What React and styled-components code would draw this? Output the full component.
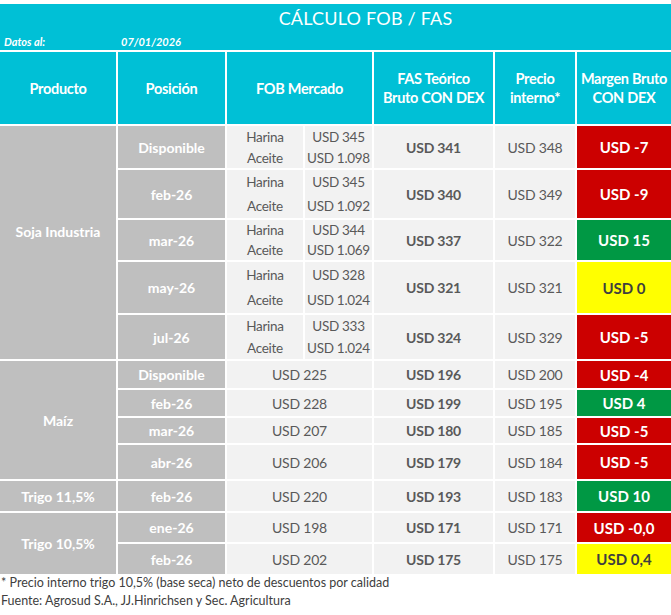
import React from 'react';
import styled, { createGlobalStyle } from 'styled-components';

const CYAN = '#00c0d6';
const LABEL_GRAY = '#bfbfbf';
const CELL_BG = '#f2f2f2';
const TEXT_GRAY = '#595959';

const marginColors = {
  red: { bg: '#cc0000', fg: '#ffffff' },
  green: { bg: '#009844', fg: '#ffffff' },
  yellow: { bg: '#ffff00', fg: '#3f3f3f' },
};

const GlobalStyle = createGlobalStyle`
  body {
    margin: 0;
    background: #ffffff;
    font-family: Lato, "Open Sans", sans-serif;
  }
`;

const Page = styled.div`
  width: 671px;
  padding-top: 4px;
`;

const Banner = styled.div`
  background: ${CYAN};
  height: 46px;
  display: grid;
  grid-template-rows: 28px 1fr;
  color: #ffffff;
`;

const Title = styled.div`
  text-align: center;
  padding-left: 60px;
  font-size: 18px;
  font-weight: 400;
  line-height: 28px;
  letter-spacing: 0.2px;
`;

const DateRow = styled.div`
  display: flex;
  align-items: center;
  font-size: 11px;
  font-weight: 700;
  font-style: italic;
`;

const DateLabel = styled.span`
  width: 117px;
  padding-left: 4px;
`;

const Table = styled.div`
  margin-top: 2px;
  display: grid;
  grid-template-columns: 116px 107px 145px 119px 80px 94px;
  grid-template-rows: ${(p) => p.$rows.map((r) => `${r}px`).join(' ')};
  gap: 2px;
  background: #ffffff;
`;

const HeadCell = styled.div`
  background: ${CYAN};
  color: #ffffff;
  font-size: 14.5px;
  font-weight: 700;
  letter-spacing: -0.3px;
  line-height: 19px;
  display: flex;
  align-items: center;
  justify-content: center;
  text-align: center;
`;

const GroupCell = styled.div`
  grid-row: span ${(p) => p.$span};
  background: ${LABEL_GRAY};
  color: #ffffff;
  font-size: 14px;
  font-weight: 700;
  display: flex;
  align-items: center;
  justify-content: center;
  padding-bottom: ${(p) => p.$lift || 0}px;
`;

const PosCell = styled.div`
  background: ${LABEL_GRAY};
  color: #ffffff;
  font-size: 14px;
  font-weight: 700;
  display: flex;
  align-items: center;
  justify-content: center;
`;

const DataCell = styled.div`
  background: ${CELL_BG};
  color: ${TEXT_GRAY};
  font-size: 14px;
  font-weight: ${(p) => (p.$bold ? 700 : 400)};
  letter-spacing: -0.2px;
  display: flex;
  align-items: center;
  justify-content: center;
`;

const FobSplit = styled.div`
  display: grid;
  grid-template-columns: 76px 1fr;
  grid-template-rows: 1fr 1fr;
  column-gap: 2px;
  background: #ffffff;
`;

const FobPart = styled.div`
  background: ${CELL_BG};
  color: ${TEXT_GRAY};
  font-size: 13.5px;
  font-weight: 400;
  letter-spacing: -0.3px;
  display: flex;
  align-items: center;
  justify-content: center;
`;

const MarginCell = styled.div`
  background: ${(p) => marginColors[p.$tone].bg};
  color: ${(p) => marginColors[p.$tone].fg};
  font-size: 15px;
  font-weight: 700;
  display: flex;
  align-items: center;
  justify-content: center;
`;

const Footer = styled.div`
  padding: 0 0 0 1px;
  color: #404040;
  font-size: 12.5px;
  font-weight: 400;
  line-height: 18px;
`;

const groups = [
  {
    name: 'Soja Industria',
    lift: 22,
    rows: [
      { pos: 'Disponible', h: 42, fob: ['USD 345', 'USD 1.098'], fas: 'USD 341', pi: 'USD 348', m: 'USD -7', tone: 'red' },
      { pos: 'feb-26', h: 48, fob: ['USD 345', 'USD 1.092'], fas: 'USD 340', pi: 'USD 349', m: 'USD -9', tone: 'red' },
      { pos: 'mar-26', h: 40, fob: ['USD 344', 'USD 1.069'], fas: 'USD 337', pi: 'USD 322', m: 'USD 15', tone: 'green' },
      { pos: 'may-26', h: 51, fob: ['USD 328', 'USD 1.024'], fas: 'USD 321', pi: 'USD 321', m: 'USD 0', tone: 'yellow' },
      { pos: 'jul-26', h: 44, fob: ['USD 333', 'USD 1.024'], fas: 'USD 324', pi: 'USD 329', m: 'USD -5', tone: 'red' },
    ],
  },
  {
    name: 'Maíz',
    rows: [
      { pos: 'Disponible', h: 27, fob: 'USD 225', fas: 'USD 196', pi: 'USD 200', m: 'USD -4', tone: 'red' },
      { pos: 'feb-26', h: 26, fob: 'USD 228', fas: 'USD 199', pi: 'USD 195', m: 'USD 4', tone: 'green' },
      { pos: 'mar-26', h: 25, fob: 'USD 207', fas: 'USD 180', pi: 'USD 185', m: 'USD -5', tone: 'red' },
      { pos: 'abr-26', h: 34, fob: 'USD 206', fas: 'USD 179', pi: 'USD 184', m: 'USD -5', tone: 'red' },
    ],
  },
  {
    name: 'Trigo 11,5%',
    rows: [
      { pos: 'feb-26', h: 30, fob: 'USD 220', fas: 'USD 193', pi: 'USD 183', m: 'USD 10', tone: 'green' },
    ],
  },
  {
    name: 'Trigo 10,5%',
    rows: [
      { pos: 'ene-26', h: 29, fob: 'USD 198', fas: 'USD 171', pi: 'USD 171', m: 'USD -0,0', tone: 'red' },
      { pos: 'feb-26', h: 30, fob: 'USD 202', fas: 'USD 175', pi: 'USD 175', m: 'USD 0,4', tone: 'yellow' },
    ],
  },
];

const headers = [
  ['Producto'],
  ['Posición'],
  ['FOB Mercado'],
  ['FAS Teórico', 'Bruto CON DEX'],
  ['Precio', 'interno*'],
  ['Margen Bruto', 'CON DEX'],
];

function Fob({ value }) {
  if (!Array.isArray(value)) return <DataCell>{value}</DataCell>;
  return (
    <FobSplit>
      <FobPart>Harina</FobPart>
      <FobPart>{value[0]}</FobPart>
      <FobPart>Aceite</FobPart>
      <FobPart>{value[1]}</FobPart>
    </FobSplit>
  );
}

export default function App() {
  const rowHeights = [72, ...groups.flatMap((g) => g.rows.map((r) => r.h))];

  return (
    <Page>
      <GlobalStyle />
      <Banner>
        <Title>CÁLCULO FOB / FAS</Title>
        <DateRow>
          <DateLabel>Datos al:</DateLabel>
          <span>07/01/2026</span>
        </DateRow>
      </Banner>
      <Table $rows={rowHeights}>
        {headers.map((lines) => (
          <HeadCell key={lines[0]}>
            <div>
              {lines.map((l) => (
                <div key={l}>{l}</div>
              ))}
            </div>
          </HeadCell>
        ))}
        {groups.map((g) =>
          g.rows.map((r, i) => (
            <React.Fragment key={g.name + r.pos}>
              {i === 0 && (
                <GroupCell $span={g.rows.length} $lift={g.lift}>
                  {g.name}
                </GroupCell>
              )}
              <PosCell>{r.pos}</PosCell>
              <Fob value={r.fob} />
              <DataCell $bold>{r.fas}</DataCell>
              <DataCell>{r.pi}</DataCell>
              <MarginCell $tone={r.tone}>{r.m}</MarginCell>
            </React.Fragment>
          ))
        )}
      </Table>
      <Footer>
        <div>* Precio interno trigo 10,5% (base seca) neto de descuentos por calidad</div>
        <div>Fuente: Agrosud S.A., JJ.Hinrichsen y Sec. Agricultura</div>
      </Footer>
    </Page>
  );
}
